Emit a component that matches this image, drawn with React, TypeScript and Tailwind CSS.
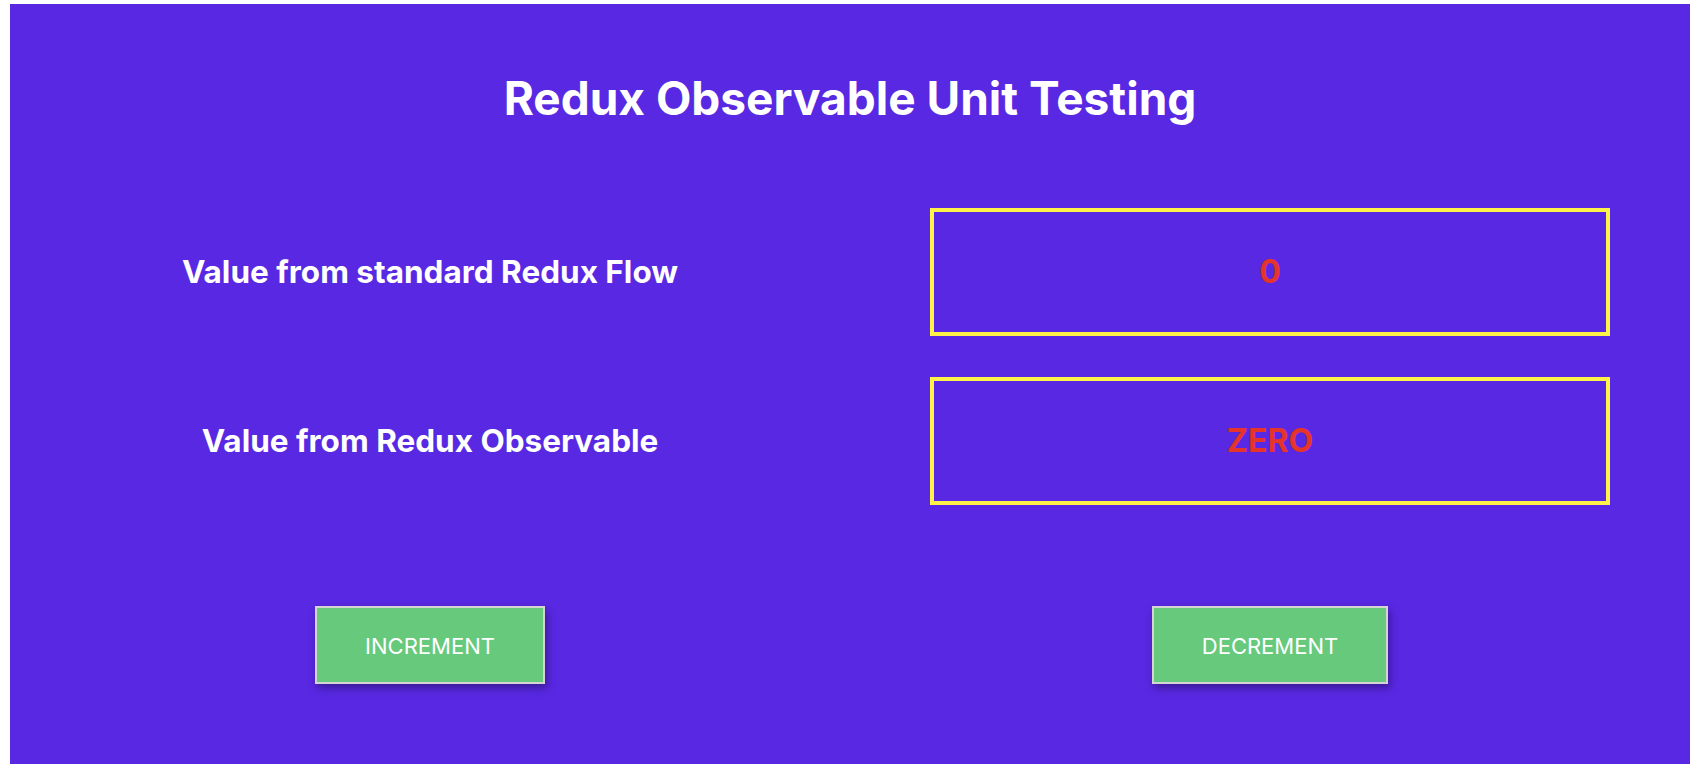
import React, { useState } from 'react';

const App: React.FC = () => {
  const [count, setCount] = useState(0);

  const observed = count === 0 ? 'ZERO' : String(count);

  return (
    <div className="min-h-screen bg-white pt-[4px] pl-[10px]" style={{ fontFamily: 'Inter, "Noto Sans", sans-serif' }}>
      <div className="w-[1680px] h-[760px] bg-[#5928e3] flex flex-col">
        {/* Title */}
        <div className="mt-[50px] h-[88px] flex items-center justify-center">
          <h1 className="text-[46px] leading-none font-bold text-white">Redux Observable Unit Testing</h1>
        </div>

        {/* Values */}
        <div className="mt-[66px] flex flex-col gap-[41px]">
          <div className="grid grid-cols-2">
            <div className="flex items-center justify-center">
              <p className="text-[31.5px] font-bold text-white">Value from standard Redux Flow</p>
            </div>
            <div className="px-[80px]">
              <div className="h-[128px] border-4 border-[#fff34a] flex items-center justify-center">
                <span className="text-[32px] font-bold text-[#e5352a]">{count}</span>
              </div>
            </div>
          </div>
          <div className="grid grid-cols-2">
            <div className="flex items-center justify-center">
              <p className="text-[31.5px] font-bold text-white">Value from Redux Observable</p>
            </div>
            <div className="px-[80px]">
              <div className="h-[128px] border-4 border-[#fff34a] flex items-center justify-center">
                <span className="text-[32px] font-bold text-[#e5352a]">{observed}</span>
              </div>
            </div>
          </div>
        </div>

        {/* Actions */}
        <div className="mt-[101px] grid grid-cols-2">
          <div className="flex justify-center">
            <button
              onClick={() => setCount(c => c + 1)}
              className="h-[78px] px-[48px] pt-[3px] bg-[#67c97c] border-2 border-[#d4d4d4] text-white text-[22px] shadow-[2px_4px_8px_rgba(0,0,0,0.35)]"
            >
              INCREMENT
            </button>
          </div>
          <div className="flex justify-center">
            <button
              onClick={() => setCount(c => c - 1)}
              className="h-[78px] px-[48px] pt-[3px] bg-[#67c97c] border-2 border-[#d4d4d4] text-white text-[22px] shadow-[2px_4px_8px_rgba(0,0,0,0.35)]"
            >
              DECREMENT
            </button>
          </div>
        </div>
      </div>
    </div>
  );
};

export default App;
